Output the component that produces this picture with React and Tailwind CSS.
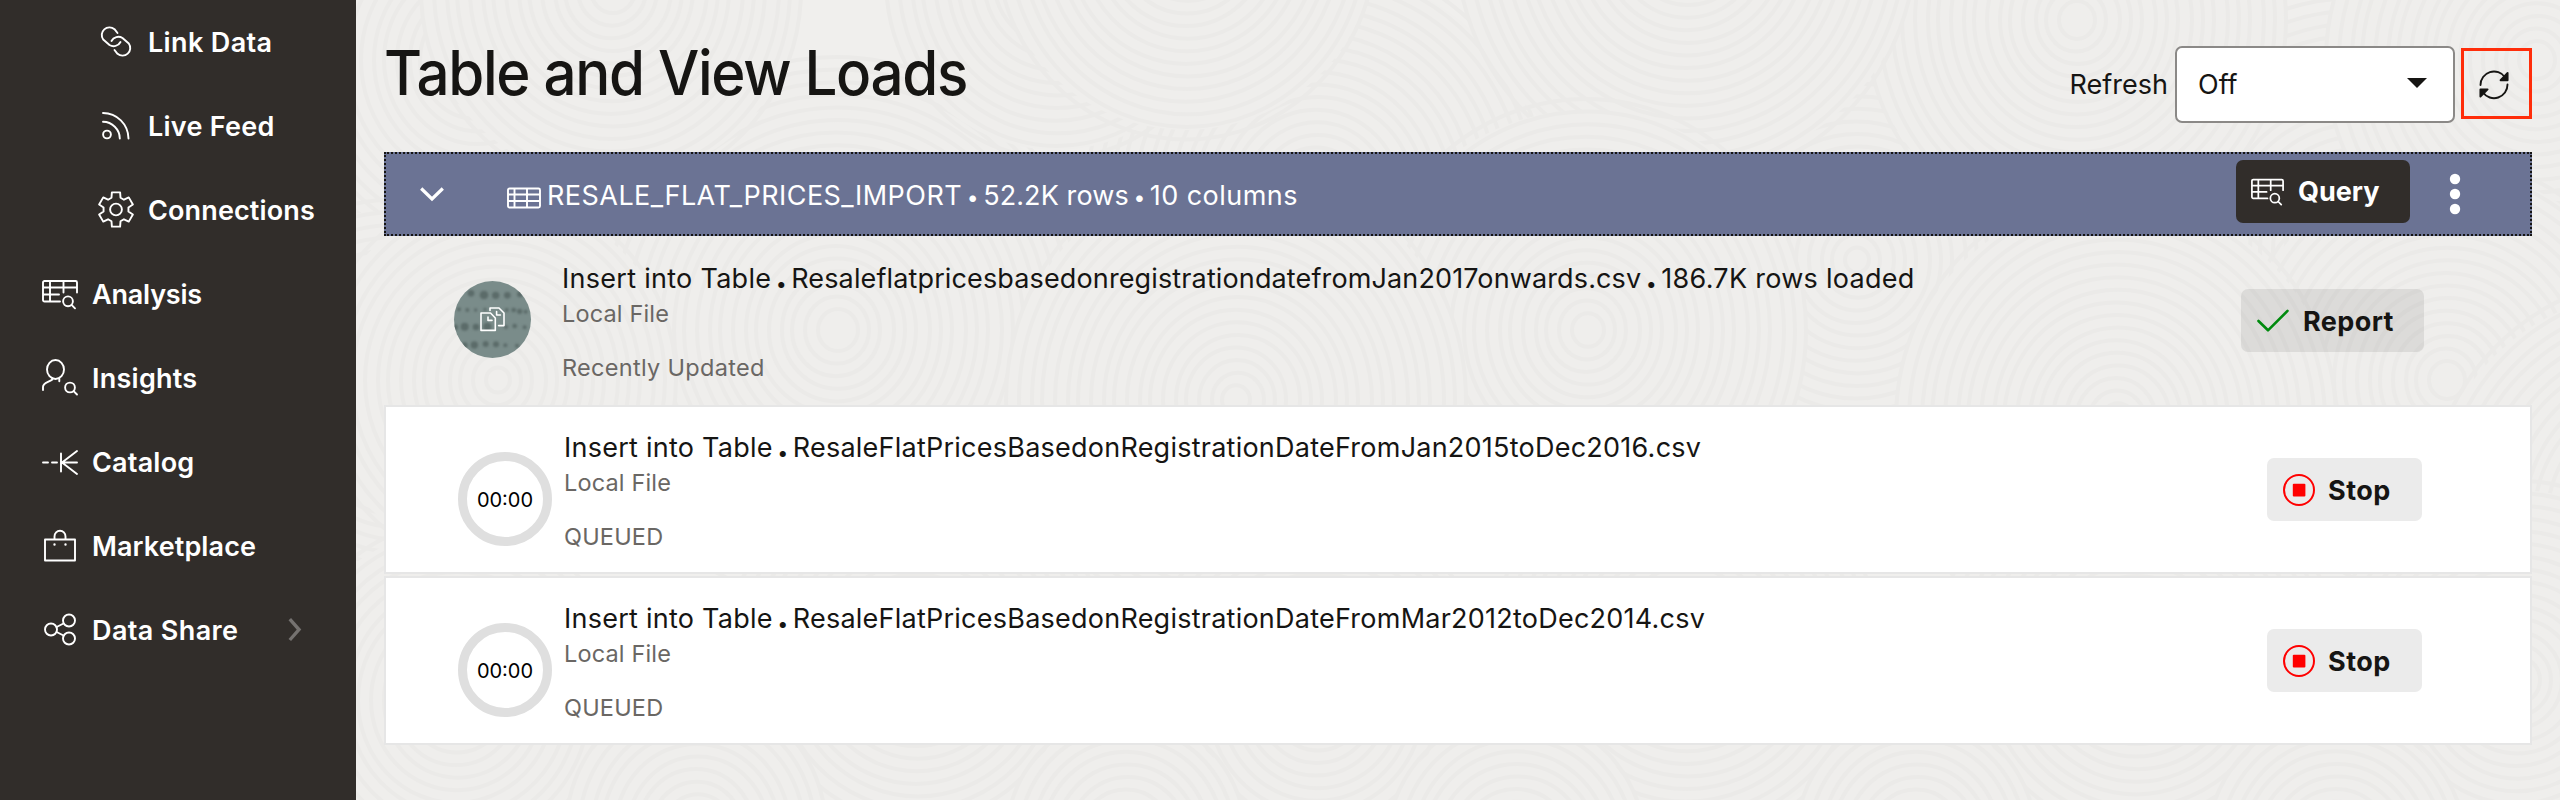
import React from "react";

const line = { fill: "none", stroke: "currentColor", strokeWidth: 1.9, strokeLinecap: "round", strokeLinejoin: "round" };

function Icon({ children, className = "size-9" }) {
  return (
    <svg viewBox="0 0 36 36" className={`shrink-0 overflow-visible ${className}`} {...line}>
      {children}
    </svg>
  );
}

const gearPath = (() => {
  const pts = [];
  for (let k = 0; k < 6; k++) {
    const base = k * 60 - 90;
    [[-21, 12.6], [-13.5, 17.6], [13.5, 17.6], [21, 12.6]].forEach(([a, r]) => {
      const t = ((base + a) * Math.PI) / 180;
      pts.push(`${(18 + r * Math.cos(t)).toFixed(2)} ${(17.5 + r * Math.sin(t)).toFixed(2)}`);
    });
  }
  return `M${pts.join("L")}Z`;
})();

const LinkIcon = () => (
  <Icon>
    <path d="M19.5 9 16.5 5.2A7.7 7.7 0 0 0 5.2 15.5L11.5 21A7.7 7.7 0 0 0 22.5 18" />
    <path d="M16.5 26 19.5 29.8A7.7 7.7 0 0 0 30.8 19.5L24.5 14A7.7 7.7 0 0 0 13.5 17" />
  </Icon>
);
const FeedIcon = () => (
  <Icon>
    <circle cx="9" cy="26.5" r="3.9" />
    <path d="M5 5A25.5 26 0 0 1 30.5 30.5M5 13.8A17 17 0 0 1 21.8 30.5" />
  </Icon>
);
const GearIcon = () => (
  <Icon>
    <path d={gearPath} />
    <circle cx="18" cy="17.5" r="5.9" />
  </Icon>
);
const AnalysisIcon = ({ className }) => (
  <Icon className={className}>
    <path d="M18 25.5H2.5A1.5 1.5 0 0 1 1 24V6.5A1.5 1.5 0 0 1 2.5 5H33.5A1.5 1.5 0 0 1 35 6.5V16.5M1 11.5H35M1 18.5H17M8 5V25.5M21.5 5V16.5" />
    <circle cx="26" cy="25.3" r="4.9" />
    <path d="M29.6 28.9 33 32.3" />
  </Icon>
);
const InsightsIcon = () => (
  <Icon>
    <ellipse cx="13.5" cy="9.5" rx="8.5" ry="9.5" />
    <path d="M1 30V27C1 22.6 6 22.6 10.4 19.4V18.2M17.3 21.3V18.6" />
    <circle cx="28" cy="27.5" r="4.9" />
    <path d="M31.6 31.1 35 34.5" />
  </Icon>
);
const CatalogIcon = () => (
  <Icon>
    <path d="M1 18.5H6M10 18.5H15M19 9.5V27.5M20 18.5H35M20 18.5 35 7M20 18.5 35 30" />
  </Icon>
);
const MarketIcon = () => (
  <Icon>
    <path d="M3 11.5H33V32.5H3ZM12.5 11.5V8.5A5.5 5.8 0 0 1 23.5 8.5V11.5" />
    <path d="M12.5 16.5H12.51M23.5 16.5H23.51" strokeWidth="2.4" />
  </Icon>
);
const ShareIcon = () => (
  <Icon>
    <circle cx="9" cy="17.5" r="6" />
    <circle cx="27" cy="8.5" r="6" />
    <circle cx="27" cy="26.5" r="6" />
    <path d="M14.6 15 21.5 11.5M14.6 20 21.5 23.5" />
  </Icon>
);

const subItems = [
  { label: "Link Data", Glyph: LinkIcon, track: "tracking-[0.35px]" },
  { label: "Live Feed", Glyph: FeedIcon, track: "tracking-[0.25px]" },
  { label: "Connections", Glyph: GearIcon, track: "tracking-[0.13px]" },
];
const items = [
  { label: "Analysis", Glyph: AnalysisIcon, track: "tracking-[-0.2px]" },
  { label: "Insights", Glyph: InsightsIcon, track: "tracking-[0.25px]" },
  { label: "Catalog", Glyph: CatalogIcon, track: "tracking-[0.2px]" },
  { label: "Marketplace", Glyph: MarketIcon, track: "tracking-[0.1px]" },
  { label: "Data Share", Glyph: ShareIcon, track: "tracking-[0.38px]", more: true },
];

function NavItem({ item, indent }) {
  const { label, Glyph, track, more } = item;
  return (
    <li className={`flex h-[84px] items-center text-white ${indent ? "pl-[98px]" : "pl-[42px]"} pr-[54px]`}>
      <Glyph />
      <span className={`ml-[14px] mt-px whitespace-nowrap text-[27px] font-semibold leading-9 ${track}`}>{label}</span>
      {more && (
        <svg viewBox="0 0 14 24" className="ml-auto h-6 w-3.5 text-[#757270]" fill="none" stroke="currentColor" strokeWidth="3.4">
          <path d="M1.8 1.2 11 11.5 1.8 22" />
        </svg>
      )}
    </li>
  );
}

const swirls = [
  [120, 60, 200], [960, 200, 230], [1500, 260, 240], [2000, 250, 240], [480, 330, 260], [2180, 60, 210],
  [40, 420, 210], [700, -20, 170], [255, -10, 190], [1720, 20, 210], [830, -60, 190], [1330, -60, 230],
  [1230, 330, 220], [880, 400, 230], [2090, 380, 210], [1760, 420, 220], [140, 380, 180], [2300, 520, 230],
  [100, 700, 170], [560, 660, 190], [960, 700, 180], [1330, 640, 190], [1780, 660, 200], [2160, 680, 190],
  [340, 830, 130], [770, 840, 120], [1160, 850, 130], [1560, 840, 120], [1980, 850, 130],
];

function Backdrop() {
  return (
    <svg className="absolute inset-0 size-full" viewBox="0 0 2204 800" fill="none">
      {swirls.map(([x, y, r], i) => (
        <g key={i}>
          <circle cx={x} cy={y} r={r} fill="#efeeec" />
          {Array.from({ length: Math.floor(r / 12) }, (_, k) => (
            <ellipse key={k} cx={x + (k % 3)} cy={y} rx={r - k * 12} ry={(r - k * 12) * 1.05} stroke="#ebeae8" strokeWidth="4" />
          ))}
        </g>
      ))}
    </svg>
  );
}

const dots = [
  [93, 70, 10], [132, 75, 13], [167, 76, 11], [202, 76, 10], [240, 73, 9],
  [57, 118, 6], [82, 120, 6], [107, 120, 5], [135, 118, 5], [200, 120, 6], [221, 120, 7], [239, 124, 8], [257, 125, 6],
  [45, 172, 9], [74, 170, 12], [108, 171, 10], [142, 170, 12], [198, 171, 6], [224, 168, 7], [254, 172, 6],
  [74, 226, 9], [103, 225, 11], [137, 222, 9], [168, 223, 9], [196, 226, 6], [231, 227, 6],
];

function FileBadge() {
  return (
    <svg viewBox="0 0 77 77" className="size-[77px] shrink-0 rounded-full bg-[#7a8c8a]">
      <g fill="#5b6b69" className="blur-[0.8px]">
        {dots.map(([x, y, r], i) => (
          <circle key={i} cx={x / 3 - 14} cy={y / 3 - 11} r={r / 3} />
        ))}
      </g>
      <g fill="none" stroke="#fff" strokeWidth="1.6" strokeLinejoin="round" strokeLinecap="round">
        <path d="M27 32H36.5L41.3 37V49.4H27Z" />
        <path d="M34 36V39.4H38" />
        <path d="M36 29.5V27H45L50 32V44.6H44.6" />
        <path d="M42.6 30.5V34H46.4" />
      </g>
    </svg>
  );
}

function LoadText({ parts, source, status, statusTrack = "tracking-[0.2px]" }) {
  return (
    <div className="flex flex-col whitespace-nowrap text-[#161513]">
      <p className="flex h-9 items-baseline text-[27px] leading-9">
        {parts.map((p, i) => (
          <React.Fragment key={i}>
            {i > 0 && <span className="w-5 text-center text-[36px] font-bold leading-[0]">.</span>}
            <span className={p.track}>{p.text}</span>
          </React.Fragment>
        ))}
      </p>
      <p className="h-[34px] text-[23.5px] leading-[34px] tracking-[0.15px] text-[#6a6764]">{source}</p>
      <p className={`mt-5 h-[34px] text-[23.5px] leading-[34px] text-[#6a6764] ${statusTrack}`}>{status}</p>
    </div>
  );
}

function QueuedCard({ file }) {
  return (
    <li className="flex h-[169px] items-start border-2 border-[#e6e6e6] bg-white pl-[72px] pr-[108px]">
      <div className="mt-[45px] flex size-[94px] shrink-0 items-center justify-center rounded-full border-[9.5px] border-[#dfdfdf] text-[20px] text-black">
        <span className="mt-[2px]">00:00</span>
      </div>
      <div className="ml-[12px] mt-[22.5px]">
        <LoadText
          parts={[{ text: "Insert into Table", track: "tracking-[0.25px]" }, { text: file, track: "tracking-[0.24px]" }]}
          source="Local File"
          status="QUEUED"
        />
      </div>
      <button className="ml-auto mt-[51px] flex h-[63px] w-[155px] items-center rounded-[7px] bg-[#ebebeb] pl-4 text-[27px] font-bold text-[#161513]">
        <svg viewBox="0 0 32 32" className="size-8 shrink-0">
          <circle cx="16" cy="16" r="15" fill="none" stroke="#f00" strokeWidth="2" />
          <rect x="9.8" y="9.8" width="12.6" height="12.6" rx="1" fill="#f00" />
        </svg>
        <span className="ml-[13px] mt-1 tracking-[0.5px]">Stop</span>
      </button>
    </li>
  );
}

export default function App() {
  return (
    <div className="flex h-[800px] w-[2560px] overflow-hidden bg-[#f0efed] font-['Inter','Liberation_Sans',sans-serif] text-[#161513]">
      <nav className="w-[356px] shrink-0 bg-[#312d2a]">
        <ul>
          {subItems.map((i) => <NavItem key={i.label} item={i} indent />)}
          {items.map((i) => <NavItem key={i.label} item={i} />)}
        </ul>
      </nav>
      <main className="relative flex-1 overflow-hidden">
        <Backdrop />
        <div className="relative px-7">
          <header className="flex h-[152px] items-start justify-between">
            <h1 className="mt-[41px] origin-left scale-x-[0.94] whitespace-nowrap text-[62px] font-[450] leading-[64px] tracking-[-1.4px]">Table and View Loads</h1>
            <div className="mt-[46px] flex items-start">
              <span className="mt-[21px] text-[27px] leading-9">Refresh</span>
              <div className="ml-[7px] flex h-[77px] w-[280px] items-center justify-between rounded-[7px] border-2 border-[#8b8987] bg-white pl-[21px] pr-[26px] text-[27px]">
                <span className="mt-px">Off</span>
                <svg viewBox="0 0 20 10" className="mb-[3px] h-[10px] w-5"><path d="M0 0H20L10 10Z" fill="#161513" /></svg>
              </div>
              <button className="ml-[6px] mt-[2px] flex h-[71px] w-[71px] items-center justify-center border-3 border-[#ff2d0a] pr-[6px]">
                <svg viewBox="0 0 32 32" className="mt-[3px] size-8 shrink-0" fill="none" stroke="#161513" strokeWidth="1.9" strokeLinejoin="round" strokeLinecap="round">
                  <path d="M2.5 16A13.5 13.5 0 0 1 27 8.2M29.5 15.5A13.5 13.5 0 0 1 5 23.5" />
                  <path d="M29.6 4V11.2H22.6ZM2.4 20.4H9.6L2.4 27.6Z" fill="#161513" />
                </svg>
              </button>
            </div>
          </header>

          <div className="flex h-[84px] items-center border-2 border-dotted border-[#161513] bg-[#6b7394] pl-[33px] pr-[69px] text-white">
            <svg viewBox="0 0 26 16" className="h-4 w-[26px]" fill="none" stroke="currentColor" strokeWidth="3.2">
              <path d="M2.2 2.5 13 13 23.8 2.5" />
            </svg>
            <svg viewBox="0 0 34 22" className="ml-[61.5px] mt-[7px] h-[22px] w-[34px]" {...line}>
              <path d="M2.5 1.5H31.5A1.5 1.5 0 0 1 33 3V19A1.5 1.5 0 0 1 31.5 20.5H2.5A1.5 1.5 0 0 1 1 19V3A1.5 1.5 0 0 1 2.5 1.5ZM1 7.5H33M1 14H33M7.5 1.5V20.5M20 1.5V20.5" />
            </svg>
            <p className="ml-[6.5px] mt-[3px] flex items-baseline whitespace-nowrap text-[27px] leading-9">
              <span className="tracking-[0.46px]">RESALE_FLAT_PRICES_IMPORT</span>
              <span className="w-[21px] text-center text-[21px] leading-[0]">•</span>
              <span className="tracking-[0.1px]">52.2K rows</span>
              <span className="w-[21px] text-center text-[21px] leading-[0]">•</span>
              <span className="tracking-[0.45px]">10 columns</span>
            </p>
            <button className="mb-[5px] ml-auto flex h-[63px] w-[174px] items-center rounded-[7px] bg-[#312d2a] pl-[15px] text-[27px] font-bold">
              <AnalysisIcon className="size-[33px]" />
              <span className="ml-[14px] mt-px">Query</span>
            </button>
            <svg viewBox="0 0 12 42" className="ml-[39px] h-[42px] w-3" fill="currentColor">
              <circle cx="6" cy="6" r="5.2" />
              <circle cx="6" cy="21" r="5.2" />
              <circle cx="6" cy="36" r="5.2" />
            </svg>
          </div>

          <ul className="flex flex-col gap-0.5">
            <li className="flex h-[167px] items-start pl-[70px] pr-[108px]">
              <div className="mt-[45px]"><FileBadge /></div>
              <div className="ml-[31px] mt-[24.5px]">
                <LoadText
                  parts={[
                    { text: "Insert into Table", track: "tracking-[0.28px]" },
                    { text: "ResaleflatpricesbasedonregistrationdatefromJan2017onwards.csv", track: "tracking-[0.13px]" },
                    { text: "186.7K rows loaded", track: "tracking-[0.28px]" },
                  ]}
                  source="Local File"
                  status="Recently Updated"
                  statusTrack="tracking-[0.3px]"
                />
              </div>
              <button className="ml-auto mt-[53px] flex h-[63px] w-[183px] items-center rounded-[7px] bg-black/8 pl-4 text-[27px] font-bold">
                <svg viewBox="0 0 32 24" className="h-6 w-8" fill="none" stroke="#008a0e" strokeWidth="2.6" strokeLinecap="round" strokeLinejoin="round">
                  <path d="M1.5 12 11 21.3 30.5 1.8" />
                </svg>
                <span className="ml-[14px] mt-[3px] tracking-[0.4px]">Report</span>
              </button>
            </li>
            <QueuedCard file="ResaleFlatPricesBasedonRegistrationDateFromJan2015toDec2016.csv" />
            <QueuedCard file="ResaleFlatPricesBasedonRegistrationDateFromMar2012toDec2014.csv" />
          </ul>
        </div>
      </main>
    </div>
  );
}
